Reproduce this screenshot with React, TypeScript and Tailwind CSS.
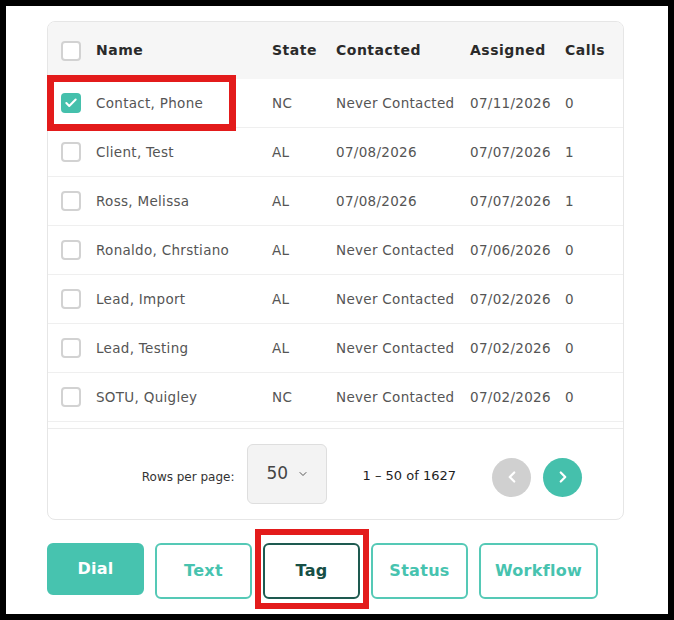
import { Check, ChevronDown, ChevronLeft, ChevronRight } from "lucide-react";

type Lead = {
    name: string;
    state: string;
    contacted: string;
    assigned: string;
    calls: number;
    checked?: boolean;
};

const leads: Lead[] = [
    { name: "Contact, Phone", state: "NC", contacted: "Never Contacted", assigned: "07/11/2026", calls: 0, checked: true },
    { name: "Client, Test", state: "AL", contacted: "07/08/2026", assigned: "07/07/2026", calls: 1 },
    { name: "Ross, Melissa", state: "AL", contacted: "07/08/2026", assigned: "07/07/2026", calls: 1 },
    { name: "Ronaldo, Chrstiano", state: "AL", contacted: "Never Contacted", assigned: "07/06/2026", calls: 0 },
    { name: "Lead, Import", state: "AL", contacted: "Never Contacted", assigned: "07/02/2026", calls: 0 },
    { name: "Lead, Testing", state: "AL", contacted: "Never Contacted", assigned: "07/02/2026", calls: 0 },
    { name: "SOTU, Quigley", state: "NC", contacted: "Never Contacted", assigned: "07/02/2026", calls: 0 },
];

const cols = "grid grid-cols-[48px_176px_64px_134px_95px_1fr] items-center";

function Box({ checked }: { checked?: boolean }) {
    if (checked) {
        return (
            <div className="ml-[13px] w-5 h-5 rounded-[4px] bg-[#45c0ac] flex items-center justify-center">
                <Check size={14} strokeWidth={3.5} className="text-white" />
            </div>
        );
    }
    return <div className="ml-[13px] w-5 h-5 rounded-[4px] border-2 border-[#d2d2d2] bg-white" />;
}

function ActionButton({ label, variant, width }: { label: string; variant: "solid" | "outline" | "active"; width: string }) {
    const look =
        variant === "solid"
            ? "bg-[#47c3af] text-white h-[52px] border-2 border-[#47c3af]"
            : variant === "active"
            ? "bg-white text-[#174f46] h-[56px] border-2 border-[#1e5a50]"
            : "bg-white text-[#47c3af] h-[56px] border-2 border-[#55c9b6]";
    return (
        <button className={`${look} ${width} rounded-[6px] text-[16px] font-bold tracking-[0.3px] flex items-center justify-center`}>
            {label}
        </button>
    );
}

export default function App() {
    return (
        <div
            className="relative w-[674px] h-[620px] border-[6px] border-black bg-white overflow-hidden"
            style={{ fontFamily: '"DejaVu Sans", sans-serif' }}
        >
            <div className="pl-[41px] pt-[15px] pr-[44px]">
                <div className="h-[499px] rounded-[8px] border border-[#e6e6e6] overflow-hidden flex flex-col">
                    <div className={`${cols} h-[57px] bg-[#f6f6f6] text-[14px] font-bold tracking-[0.5px] text-[#2a2a2a] shrink-0`}>
                        <Box />
                        <span>Name</span>
                        <span>State</span>
                        <span>Contacted</span>
                        <span>Assigned</span>
                        <span>Calls</span>
                    </div>

                    <div className="h-[349px] overflow-hidden shrink-0">
                        {leads.map((l) => (
                            <div key={l.name} className={`${cols} h-[49px] border-b border-[#efefef] text-[13.5px] tracking-[0.3px] text-[#555]`}>
                                <Box checked={l.checked} />
                                <span>{l.name}</span>
                                <span>{l.state}</span>
                                <span>{l.contacted}</span>
                                <span>{l.assigned}</span>
                                <span>{l.calls}</span>
                            </div>
                        ))}
                    </div>

                    <div className="flex-1 border-t border-[#ececec] flex items-center justify-end pr-[41px]">
                        <span className="text-[12px] text-[#333] mt-[6px]">Rows per page:</span>
                        <div className="ml-[12px] w-[80px] h-[60px] rounded-[6px] bg-[#f3f3f3] border border-[#dedede] flex items-center pl-[19px] gap-[9px] text-[17px] text-[#444]">
                            50
                            <ChevronDown size={12} strokeWidth={2} className="text-[#555]" />
                        </div>
                        <span className="ml-[36px] text-[13px] text-[#1e1e1e] mt-[4px]">1 – 50 of 1627</span>
                        <div className="ml-[36px] w-[39px] h-[39px] rounded-full bg-[#d0d0d0] flex items-center justify-center mt-[6px]">
                            <ChevronLeft size={18} strokeWidth={3} className="text-white" />
                        </div>
                        <div className="ml-[12px] w-[39px] h-[39px] rounded-full bg-[#45c0ac] flex items-center justify-center mt-[6px]">
                            <ChevronRight size={18} strokeWidth={3} className="text-white" />
                        </div>
                    </div>
                </div>

                <div className="mt-[23px] flex items-start gap-[11px]">
                    <ActionButton label="Dial" variant="solid" width="w-[97px]" />
                    <ActionButton label="Text" variant="outline" width="w-[97px]" />
                    <ActionButton label="Tag" variant="active" width="w-[97px]" />
                    <ActionButton label="Status" variant="outline" width="w-[97px]" />
                    <ActionButton label="Workflow" variant="outline" width="w-[119px]" />
                </div>
            </div>

            {/* selection callouts */}
            <div className="absolute left-[41px] top-[69px] w-[189px] h-[56px] border-[7px] border-[#e31b1b]" />
            <div className="absolute left-[249px] top-[523px] w-[114px] h-[80px] border-[6px] border-[#e31b1b]" />
        </div>
    );
}
